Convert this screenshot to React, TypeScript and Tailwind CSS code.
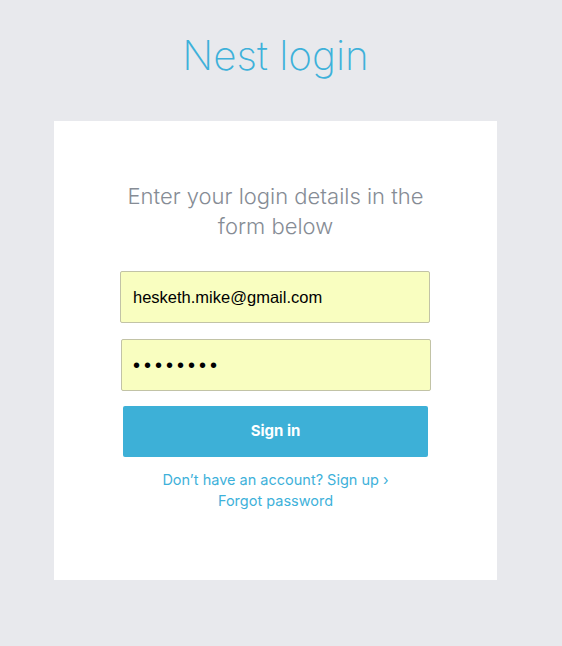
import { useState } from "react";

const FONT = { fontFamily: "Inter, 'Noto Sans', sans-serif" };
const FIELD_FONT = { fontFamily: "'Liberation Sans', Arial, sans-serif" };

export default function App() {
  const [email, setEmail] = useState("hesketh.mike@gmail.com");
  const [password, setPassword] = useState("password");

  return (
    <div className="min-h-[646px] bg-[#e8e9ed] pl-[54px] pr-[65px] pt-[28px]" style={FONT}>
      <h1 className="text-center text-[40.5px] font-extralight leading-[56px] text-[#3eb1da]">
        Nest login
      </h1>

      <div className="mt-[37px] flex h-[459px] w-[443px] flex-col items-center bg-white pt-[60px]">
        <p className="text-center text-[22px] font-light leading-[30px] text-[#868c95]">
          Enter your login details in the
          <br />
          form below
        </p>

        <form className="mt-[30px] flex w-[311px] flex-col" onSubmit={(e) => e.preventDefault()}>
          <input
            type="email"
            value={email}
            onChange={(e) => setEmail(e.target.value)}
            className="h-[52px] w-[310px] rounded-[2px] border border-[#c2c3a6] bg-[#f9fec0] px-[12px] text-[16.5px] text-black outline-none"
            style={FIELD_FONT}
          />
          <input
            type="password"
            value={password}
            onChange={(e) => setPassword(e.target.value)}
            className="ml-px mt-[16px] h-[52px] w-[310px] rounded-[2px] border border-[#c2c3a6] bg-[#f9fec0] px-[11px] text-[20px] tracking-[4px] text-black outline-none"
            style={FIELD_FONT}
          />
          <button
            type="submit"
            className="ml-[3px] mt-[15px] h-[51px] w-[305px] rounded-[2px] bg-[#3db0d7] text-[15px] font-bold text-white"
          >
            Sign in
          </button>
        </form>

        <div className="mt-[12px] flex flex-col items-center text-[14.5px] leading-[21px] text-[#3eb1da]">
          <a href="#">Don’t have an account? Sign up ›</a>
          <a href="#">Forgot password</a>
        </div>
      </div>
    </div>
  );
}
